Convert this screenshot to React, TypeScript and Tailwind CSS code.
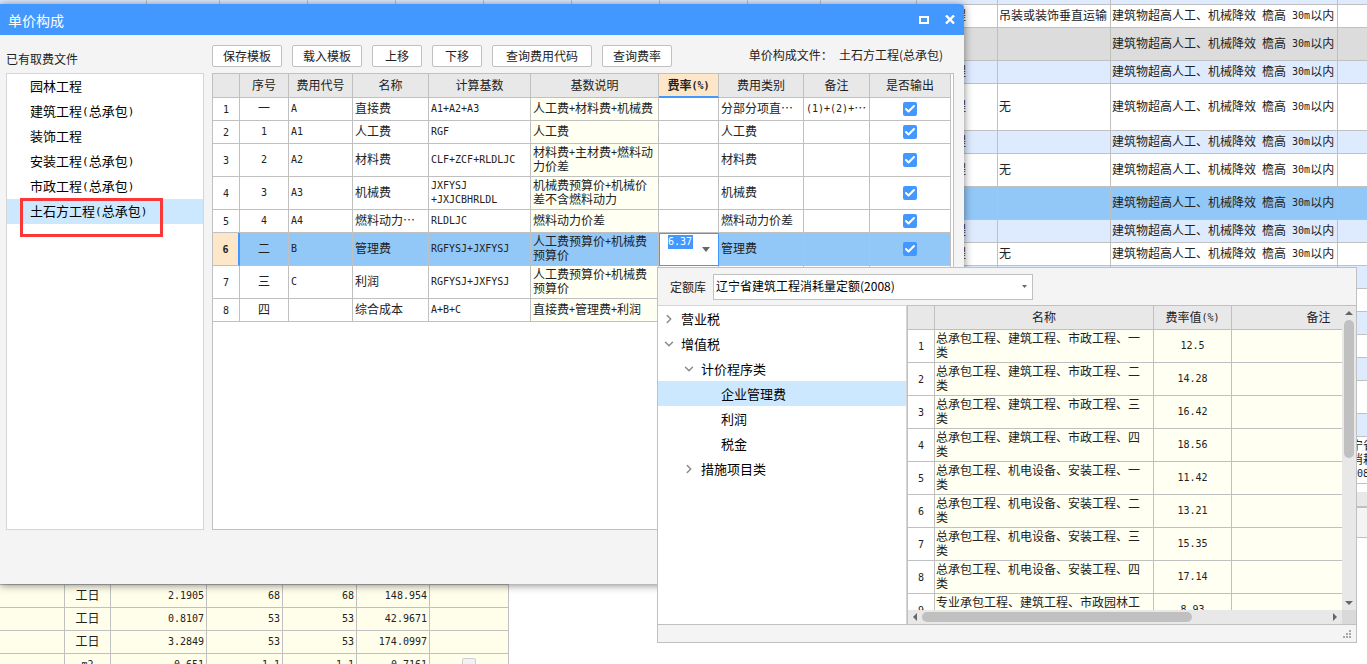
import React from "react";
import { Check, ChevronDown, ChevronRight } from "lucide-react";

/** Table text: CJK at full width, Latin runs at half width. */
function Song({ text, large = false }: { text: string; large?: boolean }) {
  const parts = text.split(/([\x20-\x7e]+)/).filter(Boolean);
  return (
    <>
      {parts.map((part, i) =>
        /^[\x20-\x7e]+$/.test(part) ? (
          <span
            key={i}
            className={
              "align-[1px] whitespace-pre leading-none font-['DejaVu_Sans_Mono','Liberation_Mono',monospace] " +
              (large ? "text-[11px]" : "text-[10px]")
            }
          >
            {part}
          </span>
        ) : (
          <React.Fragment key={i}>{part}</React.Fragment>
        )
      )}
    </>
  );
}

function Caret({ className = "" }: { className?: string }) {
  return (
    <svg viewBox="0 0 8 5" preserveAspectRatio="none" className={"fill-[#666] " + className} aria-hidden="true">
      <path d="M0 0h8L4 5z" />
    </svg>
  );
}

/* ---------- Background quota table ---------- */

const quotaCols = [
  "w-[147px]", "w-[73px]", "w-[88px]", "w-[88px]", "w-[88px]", "w-[88px]", "w-[88px]",
  "w-[88px]", "w-[73px]", "w-[96px]", "w-[81px]", "w-[113px]", "w-[227px]", "w-auto",
];

type QuotaRow = { cls: string; kind?: string; haul?: string; high?: boolean; lib?: boolean };

const quotaRows: QuotaRow[] = [
  { cls: "h-[5px] bg-[#deeafe]" },
  { cls: "h-[23px] bg-white", kind: "建筑工程", haul: "吊装或装饰垂直运输", high: true },
  { cls: "h-[33px] bg-[#dcdcdc]", high: true },
  { cls: "h-[23px] bg-[#deeafe]", kind: "建筑工程", high: true },
  { cls: "h-[47px] bg-white", kind: "建筑工程", haul: "无", high: true },
  { cls: "h-[23px] bg-[#deeafe]", kind: "建筑工程", high: true },
  { cls: "h-[33px] bg-white", kind: "建筑工程", haul: "无", high: true },
  { cls: "h-[33px] bg-[#92c8f7]", high: true },
  { cls: "h-[23px] bg-[#deeafe]", kind: "建筑工程", high: true },
  { cls: "h-[23px] bg-white", kind: "建筑工程", haul: "无", high: true },
  { cls: "h-[23px] bg-[#deeafe]" },
  { cls: "h-[23px] bg-white" },
  { cls: "h-[23px] bg-[#deeafe]" },
  { cls: "h-[23px] bg-white" },
  { cls: "h-[23px] bg-[#deeafe]" },
  { cls: "h-[33px] bg-white" },
  { cls: "h-[23px] bg-[#deeafe]" },
  { cls: "h-[47px] bg-white", lib: true },
];

function QuotaTable() {
  const cell = "overflow-hidden border-r border-b border-[#c0c0c0] p-0 pb-0.5 pl-px whitespace-pre last:border-r-0";
  return (
    <table className="w-full table-fixed border-separate border-spacing-0 text-xs leading-[14px]">
      <colgroup>
        {quotaCols.map((w, i) => (
          <col key={i} className={w} />
        ))}
      </colgroup>
      <tbody>
        {quotaRows.map((row, r) => (
          <tr key={r} className={row.cls}>
            {quotaCols.map((_, c) => (
              <td key={c} className={cell}>
                {c === 10 && row.kind}
                {c === 11 && row.haul}
                {c === 12 && row.high && <Song text="建筑物超高人工、机械降效 檐高 30m以内" />}
                {c === 13 && row.lib && <Song text={"辽宁省\n程消耗\n(2008)"} />}
              </td>
            ))}
          </tr>
        ))}
      </tbody>
    </table>
  );
}

/* ---------- Background labour table ---------- */

const labourCols = ["w-[65px]", "w-[46px]", "w-[96px]", "w-[76px]", "w-[74px]", "w-[73px]", "w-[79px]"];

const labourRows = [
  ["", "工日", "2.1905", "68", "68", "148.954"],
  ["", "工日", "0.8107", "53", "53", "42.9671"],
  ["", "工日", "3.2849", "53", "53", "174.0997"],
  ["", "m2", "0.651", "1.1", "1.1", "0.7161"],
];

function LabourTable() {
  return (
    <table className="w-[509px] table-fixed border-separate border-spacing-0 border-t border-[#c0c0c0] bg-[#fffeea] text-xs leading-[14px]">
      <colgroup>
        {labourCols.map((w, i) => (
          <col key={i} className={w} />
        ))}
      </colgroup>
      <tbody>
        {labourRows.map((row, r) => (
          <tr key={r} className="h-[23px]">
            {row.map((v, c) => (
              <td
                key={c}
                className={
                  "border-r border-b border-[#c0c0c0] px-0.5 pt-0 pb-0.5 " + (c < 2 ? "text-center" : "text-right")
                }
              >
                <Song text={v} />
              </td>
            ))}
            <td className="border-r border-b border-[#c0c0c0] p-0 text-center">
              {r === 3 && (
                <input
                  type="checkbox"
                  aria-label="是否暂估"
                  className="mx-auto block size-3.5 appearance-none rounded-xs border border-[#cfcfcf] bg-[#f2f2f2]"
                />
              )}
            </td>
          </tr>
        ))}
      </tbody>
    </table>
  );
}

/* ---------- Fee table in the dialog ---------- */

const files = ["园林工程", "建筑工程(总承包)", "装饰工程", "安装工程(总承包)", "市政工程(总承包)", "土石方工程(总承包)"];

const buttons: [string, string][] = [
  ["保存模板", "w-[70px]"],
  ["载入模板", "w-[70px]"],
  ["上移", "w-[50px]"],
  ["下移", "w-[50px]"],
  ["查询费用代码", "w-[100px]"],
  ["查询费率", "w-[70px]"],
];

const feeCols: [string, string][] = [
  ["", "w-[27px]"],
  ["序号", "w-[49px]"],
  ["费用代号", "w-[64px]"],
  ["名称", "w-[76px]"],
  ["计算基数", "w-[102px]"],
  ["基数说明", "w-[128px]"],
  ["费率(%)", "w-[60px]"],
  ["费用类别", "w-[85px]"],
  ["备注", "w-[66px]"],
  ["是否输出", "w-[81px]"],
];

// 序号, 费用代号, 名称, 计算基数, 基数说明, 费用类别, 备注, 是否输出
type FeeRow = [string, string, string, string, string, string, string, boolean];

const feeRows: FeeRow[] = [
  ["一", "A", "直接费", "A1+A2+A3", "人工费+材料费+机械费", "分部分项直…", "(1)+(2)+…", true],
  ["1", "A1", "人工费", "RGF", "人工费", "人工费", "", true],
  ["2", "A2", "材料费", "CLF+ZCF+RLDLJC", "材料费+主材费+燃料动\n力价差", "材料费", "", true],
  ["3", "A3", "机械费", "JXFYSJ\n+JXJCBHRLDL", "机械费预算价+机械价\n差不含燃料动力", "机械费", "", true],
  ["4", "A4", "燃料动力…", "RLDLJC", "燃料动力价差", "燃料动力价差", "", true],
  ["二", "B", "管理费", "RGFYSJ+JXFYSJ", "人工费预算价+机械费\n预算价", "管理费", "", true],
  ["三", "C", "利润", "RGFYSJ+JXFYSJ", "人工费预算价+机械费\n预算价", "利润", "", true],
  ["四", "", "综合成本", "A+B+C", "直接费+管理费+利润", "综合成本", "", true],
];

function FeeTable() {
  const cell = "border-b border-[#c0c0c0] pt-0 whitespace-pre overflow-hidden";
  return (
    <table className="table-fixed border-separate border-spacing-0 text-xs leading-[14px] w-[738px]">
      <colgroup>
        {feeCols.map(([, w], i) => (
          <col key={i} className={w} />
        ))}
      </colgroup>
      <thead>
        <tr className="h-6">
          {feeCols.map(([name], i) => (
            <th
              key={i}
              scope="col"
              className={
                i === 6
                  ? "border-r border-b-2 border-r-[#c0c0c0] border-b-[#4398ff] bg-[#fee6c8] p-0 pb-px font-bold"
                  : "border-r border-b border-[#c0c0c0] bg-[#e8e8e8] p-0 pb-0.5 font-normal"
              }
            >
              <Song text={name} />
            </th>
          ))}
        </tr>
      </thead>
      <tbody>
        {feeRows.map((row, r) => {
          const active = r === 5;
          const tall = r === 2 || r === 3 || r === 5 || r === 6;
          const plain = cell + " border-r px-0.5 pb-0.5";
          return (
            <tr key={r} className={(tall ? "h-[33px]" : "h-[23px]") + (active ? " bg-[#92c8f7]" : " bg-white")}>
              <td
                className={
                  cell +
                  " px-0 pb-0 text-center " +
                  (active ? "border-r-2 border-r-[#4398ff] bg-[#fee6c8] font-bold" : "border-r bg-white")
                }
              >
                <Song text={String(r + 1)} />
              </td>
              <td className={plain + " text-center"}>
                <Song text={row[0]} />
              </td>
              <td className={plain}>
                <Song text={row[1]} />
              </td>
              <td className={plain}>
                <Song text={row[2]} />
              </td>
              <td className={plain}>
                <Song text={row[3]} />
              </td>
              <td className={plain + (active ? "" : " bg-[#fffff2]")}>
                <Song text={row[4]} />
              </td>
              {active ? (
                <td className="border border-[#4398ff] bg-white p-0">
                  <div className="flex h-[31px] items-start justify-between pt-px pr-2 pl-2">
                    <input
                      aria-label="费率"
                      defaultValue="6.37"
                      className="h-[14px] w-[25px] bg-[#4398ff] p-0 font-['DejaVu_Sans_Mono',monospace] text-[10px] leading-[14px] text-white outline-none"
                    />
                    <button type="button" aria-label="选择费率" className="flex h-7 items-center">
                      <Caret className="h-[5px] w-2" />
                    </button>
                  </div>
                </td>
              ) : (
                <td className={plain} />
              )}
              <td className={plain}>
                <Song text={row[5]} />
              </td>
              <td className={plain}>
                <Song text={row[6]} />
              </td>
              <td className={cell + " border-r p-0"}>
                <label className="mx-auto grid size-3.5 place-items-center">
                  <input
                    type="checkbox"
                    defaultChecked={row[7]}
                    aria-label={"输出第" + (r + 1) + "行"}
                    className="col-start-1 row-start-1 size-3.5 appearance-none rounded-xs bg-[#4398ff]"
                  />
                  <Check
                    className="pointer-events-none col-start-1 row-start-1 size-3 text-white"
                    strokeWidth={4}
                    aria-hidden="true"
                  />
                </label>
              </td>
            </tr>
          );
        })}
      </tbody>
    </table>
  );
}

function Dialog() {
  return (
    <section
      aria-label="单价构成"
      className="absolute top-1 left-0 flex h-[580px] w-[964px] flex-col rounded-tr bg-[#f4f4f4] shadow-[0_1px_9px_rgba(0,0,0,0.5)]"
    >
      <header className="flex h-[31px] shrink-0 items-center rounded-tr bg-[#4398ff] pr-[9px] pl-2 text-white">
        <h1 className="text-sm leading-5">单价构成</h1>
        <div className="ml-auto flex items-center gap-4">
          <button type="button" aria-label="最大化">
            <svg viewBox="0 0 10 8" className="h-2 w-2.5" aria-hidden="true">
              <path d="M1 1h8v6H1z" fill="none" stroke="currentColor" strokeWidth="2" />
            </svg>
          </button>
          <button type="button" aria-label="关闭">
            <svg viewBox="0 0 10 9" className="h-[9px] w-2.5" aria-hidden="true">
              <path d="M1 .5l8 8M9 .5l-8 8" fill="none" stroke="currentColor" strokeWidth="2.4" />
            </svg>
          </button>
        </div>
      </header>

      <div className="flex gap-2 px-1.5 pt-2.5">
        <div className="flex w-[198px] flex-col">
          <h2 className="flex h-7 items-center text-xs">已有取费文件</h2>
          <ul className="h-[457px] border border-[#d5d5d5] bg-white text-[13px] leading-[23px] text-black">
            {files.map((name, i) => (
              <li key={name} className={"relative h-[25px] " + (i === 5 ? "bg-[#cce8ff]" : "")}>
                <button type="button" className="block w-full pb-0.5 pl-[23px] text-left">
                  <Song text={name} large />
                </button>
                {i === 5 && (
                  <span className="pointer-events-none absolute -top-px left-[13px] h-[39px] w-[143px] border-3 border-[#fa3838]" />
                )}
              </li>
            ))}
          </ul>
        </div>

        <div className="flex w-[742px] flex-col">
          <div className="flex h-7 items-start gap-2.5">
            {buttons.map(([name, w]) => (
              <button
                key={name}
                type="button"
                className={"h-[22px] rounded-xs border border-[#c0c0c0] bg-white text-xs leading-5 whitespace-nowrap " + w}
              >
                {name}
              </button>
            ))}
            <p className="ml-auto flex h-5 items-center gap-1.5 pr-[11px] text-xs">
              <span>单价构成文件：</span>
              <span>土石方工程(总承包)</span>
            </p>
          </div>
          <div className="h-[457px] overflow-hidden border border-[#c0c0c0] bg-white">
            <FeeTable />
          </div>
        </div>
      </div>
    </section>
  );
}

/* ---------- Rate picker ---------- */

const tree: { name: string; pad: string; mark?: "open" | "closed"; active?: boolean }[] = [
  { name: "营业税", pad: "pl-1", mark: "closed" },
  { name: "增值税", pad: "pl-1", mark: "open" },
  { name: "计价程序类", pad: "pl-6", mark: "open" },
  { name: "企业管理费", pad: "pl-[63px]", active: true },
  { name: "利润", pad: "pl-[63px]" },
  { name: "税金", pad: "pl-[63px]" },
  { name: "措施项目类", pad: "pl-6", mark: "closed" },
];

const rateRows: [string, string][] = [
  ["总承包工程、建筑工程、市政工程、一\n类", "12.5"],
  ["总承包工程、建筑工程、市政工程、二\n类", "14.28"],
  ["总承包工程、建筑工程、市政工程、三\n类", "16.42"],
  ["总承包工程、建筑工程、市政工程、四\n类", "18.56"],
  ["总承包工程、机电设备、安装工程、一\n类", "11.42"],
  ["总承包工程、机电设备、安装工程、二\n类", "13.21"],
  ["总承包工程、机电设备、安装工程、三\n类", "15.35"],
  ["总承包工程、机电设备、安装工程、四\n类", "17.14"],
  ["专业承包工程、建筑工程、市政园林工\n程、一类", "8.93"],
];

function RateTable() {
  const head = "border-r border-b border-[#c0c0c0] bg-[#e8e8e8] p-0 pb-0.5 font-normal";
  const cell = "border-r border-b border-[#c0c0c0] pt-0 pb-0.5 whitespace-pre";
  return (
    <table className="w-[498px] table-fixed border-separate border-spacing-0 text-xs leading-[14px]">
      <colgroup>
        <col className="w-[27px]" />
        <col className="w-[219px]" />
        <col className="w-[78px]" />
        <col className="w-[174px]" />
      </colgroup>
      <thead>
        <tr className="h-6">
          <th scope="col" className={head} />
          <th scope="col" className={head}>名称</th>
          <th scope="col" className={head}>
            <Song text="费率值(%)" />
          </th>
          <th scope="col" className={head}>备注</th>
        </tr>
      </thead>
      <tbody>
        {rateRows.map(([name, rate], i) => (
          <tr key={name} className="h-[33px] bg-[#fffff2]">
            <td className="border-r border-b border-[#c0c0c0] bg-white p-0 text-center">
              <Song text={String(i + 1)} />
            </td>
            <td className={cell + " px-px"}>{name}</td>
            <td className={cell + " px-0 text-center"}>
              <Song text={rate} />
            </td>
            <td className={cell} />
          </tr>
        ))}
      </tbody>
    </table>
  );
}

function RatePicker() {
  return (
    <section
      aria-label="选择费率"
      className="absolute top-[267px] left-[657px] flex h-[376px] w-[700px] flex-col border border-[#c0c0c0] bg-[#f4f4f4]"
    >
      <div className="flex h-[37px] shrink-0 items-center pl-3">
        <label htmlFor="library" className="w-[43px] text-xs">
          定额库
        </label>
        <div className="grid w-80 items-center">
          <select
            id="library"
            className="col-start-1 row-start-1 h-[26px] w-full appearance-none border border-[#c0c0c0] bg-white pb-0.5 pl-0.5 text-xs text-black"
          >
            <option>辽宁省建筑工程消耗量定额(2008)</option>
          </select>
          <Caret className="pointer-events-none col-start-1 row-start-1 mr-1.5 h-[3px] w-[5px] justify-self-end" />
        </div>
      </div>

      <div className="flex min-h-0 flex-1">
        <ul className="w-[249px] shrink-0 border-t border-r border-[#d5d5d5] bg-white text-[13px] leading-[25px] text-black">
          {tree.map((node) => (
            <li key={node.name} className={"h-[25px] " + (node.active ? "bg-[#cce8ff]" : "")}>
              <button type="button" className={"flex h-[25px] w-full items-center gap-[5px] text-left " + node.pad}>
                {node.mark === "open" && (
                  <ChevronDown className="size-3.5 text-[#8a8a8a]" strokeWidth={2.5} aria-hidden="true" />
                )}
                {node.mark === "closed" && (
                  <ChevronRight className="size-3.5 text-[#8a8a8a]" strokeWidth={2.5} aria-hidden="true" />
                )}
                <span>{node.name}</span>
              </button>
            </li>
          ))}
        </ul>

        <div className="flex min-w-0 flex-1 flex-col border-t border-l border-[#c0c0c0]">
          <div className="flex min-h-0 flex-1">
            <div className="min-w-0 flex-1 overflow-hidden bg-white">
              <RateTable />
            </div>
            <div className="flex w-3.5 shrink-0 flex-col items-center bg-[#e8e8e8] py-[5px]">
              <Caret className="h-1 w-2 rotate-180" />
              <span className="mt-[5px] h-[138px] w-2.5 rounded-full bg-[#c0c0c0]" />
              <Caret className="mt-auto h-1 w-2" />
            </div>
          </div>
          <div className="flex h-3.5 shrink-0 bg-[#e8e8e8]">
            <div className="flex flex-1 items-center px-[5px]">
              <svg viewBox="0 0 4 8" className="h-2 w-1 fill-[#666]" aria-hidden="true">
                <path d="M4 0v8L0 4z" />
              </svg>
              <span className="ml-[5px] h-2.5 w-[270px] rounded-full bg-[#c0c0c0]" />
              <svg viewBox="0 0 4 8" className="ml-auto h-2 w-1 fill-[#666]" aria-hidden="true">
                <path d="M0 0v8l4-4z" />
              </svg>
            </div>
            <span className="w-3.5 bg-[#d9d9d9]" />
          </div>
        </div>
      </div>

      <footer className="flex h-[18px] shrink-0 items-end justify-end border-t border-[#c0c0c0] pr-[5px] pb-1">
        <svg viewBox="0 0 8 8" className="size-2 fill-[#a8a8a8]" aria-hidden="true">
          <path d="M6 0h2v2H6zM3 3h2v2H3zM6 3h2v2H6zM0 6h2v2H0zM3 6h2v2H3zM6 6h2v2H6z" />
        </svg>
      </footer>
    </section>
  );
}

export default function App() {
  return (
    <main
      lang="zh-CN"
      className="relative h-screen min-h-[664px] overflow-hidden bg-white font-['Noto_Sans_CJK_SC',sans-serif] text-[#222]"
    >
      <QuotaTable />
      <div className="mt-2 flex h-[46px] flex-col border-b border-[#c0c0c0] bg-[#f4f4f4]">
        <div className="h-4 border-b-2 border-[#c0c0c0] bg-[#e8e8e8]" />
      </div>
      <div className="h-[46px]" />
      <LabourTable />
      <Dialog />
      <RatePicker />
    </main>
  );
}
